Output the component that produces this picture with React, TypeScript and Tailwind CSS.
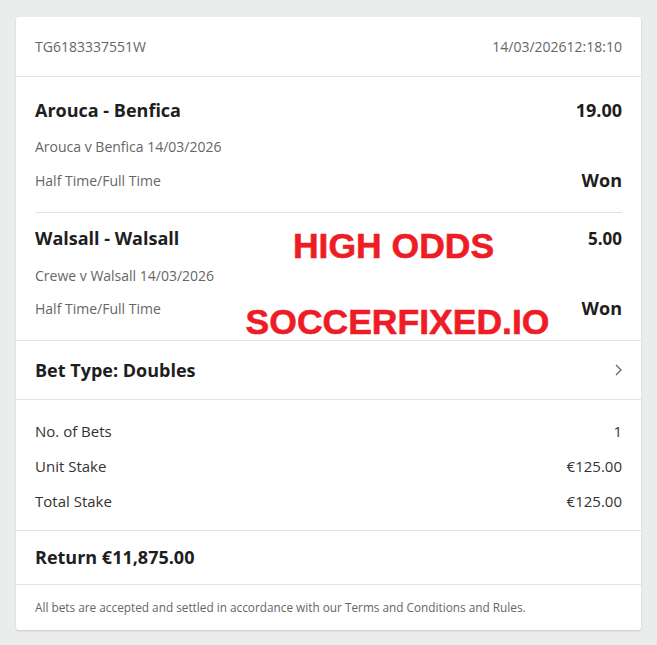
import React from "react";

function Row({ label, value }: { label: string; value: string }) {
  return (
    <div className="flex items-center justify-between h-[35px] text-[15px] text-[#333]">
      <span>{label}</span>
      <span>{value}</span>
    </div>
  );
}

export default function App() {
  return (
    <div className="min-h-[645px] w-[657px] bg-[#ebecec] pt-[17px] px-[16px] pb-[15px] font-['Open_Sans',sans-serif]">
      <div className="relative bg-white rounded-[3px] shadow-[0_1px_2px_rgba(0,0,0,0.15)]">
        <div className="flex items-center justify-between h-[60px] px-[19px] border-b border-[#e2e2e2] text-[14px] text-[#666]">
          <span>TG6183337551W</span>
          <span>14/03/202612:18:10</span>
        </div>

        <div className="px-[19px]">
          <div className="border-b border-[#e2e2e2] pb-[14px]">
            <div className="flex items-center justify-between h-[33px] mt-[17px] text-[18px] font-bold text-[#1e1e1e]">
              <span>Arouca - Benfica</span>
              <span>19.00</span>
            </div>
            <div className="h-[32px] flex items-center text-[14px] text-[#666] mt-[3px]">Arouca v Benfica 14/03/2026</div>
            <div className="flex items-center justify-between h-[36px] text-[14px] text-[#666]">
              <span>Half Time/Full Time</span>
              <span className="text-[18px] font-bold text-[#1e1e1e]">Won</span>
            </div>
          </div>
          <div className="pb-[16px]">
            <div className="flex items-center justify-between h-[33px] mt-[9px] text-[18px] font-bold text-[#1e1e1e]">
              <span>Walsall - Walsall</span>
              <span className="text-[17px]">5.00</span>
            </div>
            <div className="h-[34px] flex items-center text-[14px] text-[#666] mt-[3px]">Crewe v Walsall 14/03/2026</div>
            <div className="flex items-center justify-between h-[32px] text-[14px] text-[#666]">
              <span>Half Time/Full Time</span>
              <span className="text-[18px] font-bold text-[#1e1e1e]">Won</span>
            </div>
          </div>
        </div>

        <div className="flex items-center justify-between h-[60px] px-[19px] border-t border-b border-[#e2e2e2]">
          <span className="text-[18px] font-bold text-[#1e1e1e]">Bet Type: Doubles</span>
          <svg width="10" height="14" viewBox="0 0 10 14" className="mr-[-1px]">
            <path d="M3 2 L8 7 L3 12" fill="none" stroke="#666" strokeWidth="1.3" />
          </svg>
        </div>

        <div className="px-[19px] pt-[14px] pb-[11px] border-b border-[#e2e2e2]">
          <Row label="No. of Bets" value="1" />
          <Row label="Unit Stake" value="€125.00" />
          <Row label="Total Stake" value="€125.00" />
        </div>

        <div className="flex items-center h-[54px] px-[19px] border-b border-[#e2e2e2] text-[18px] font-bold text-[#1e1e1e]">
          Return €11,875.00
        </div>

        <div className="flex items-center h-[45px] px-[19px] pt-[1px] text-[11.8px] text-[#666]">
          All bets are accepted and settled in accordance with our Terms and Conditions and Rules.
        </div>

        <div className="absolute left-0 right-0 top-[212px] flex flex-col items-center pointer-events-none font-['Liberation_Sans',Arial,sans-serif] font-bold text-[#ee1c25] text-[35.5px] leading-none [-webkit-text-stroke:0.6px_#ee1c25]">
          <div className="ml-[130px]">HIGH ODDS</div>
          <div className="ml-[138px] mt-[40px]">SOCCERFIXED.IO</div>
        </div>
      </div>
    </div>
  );
}
